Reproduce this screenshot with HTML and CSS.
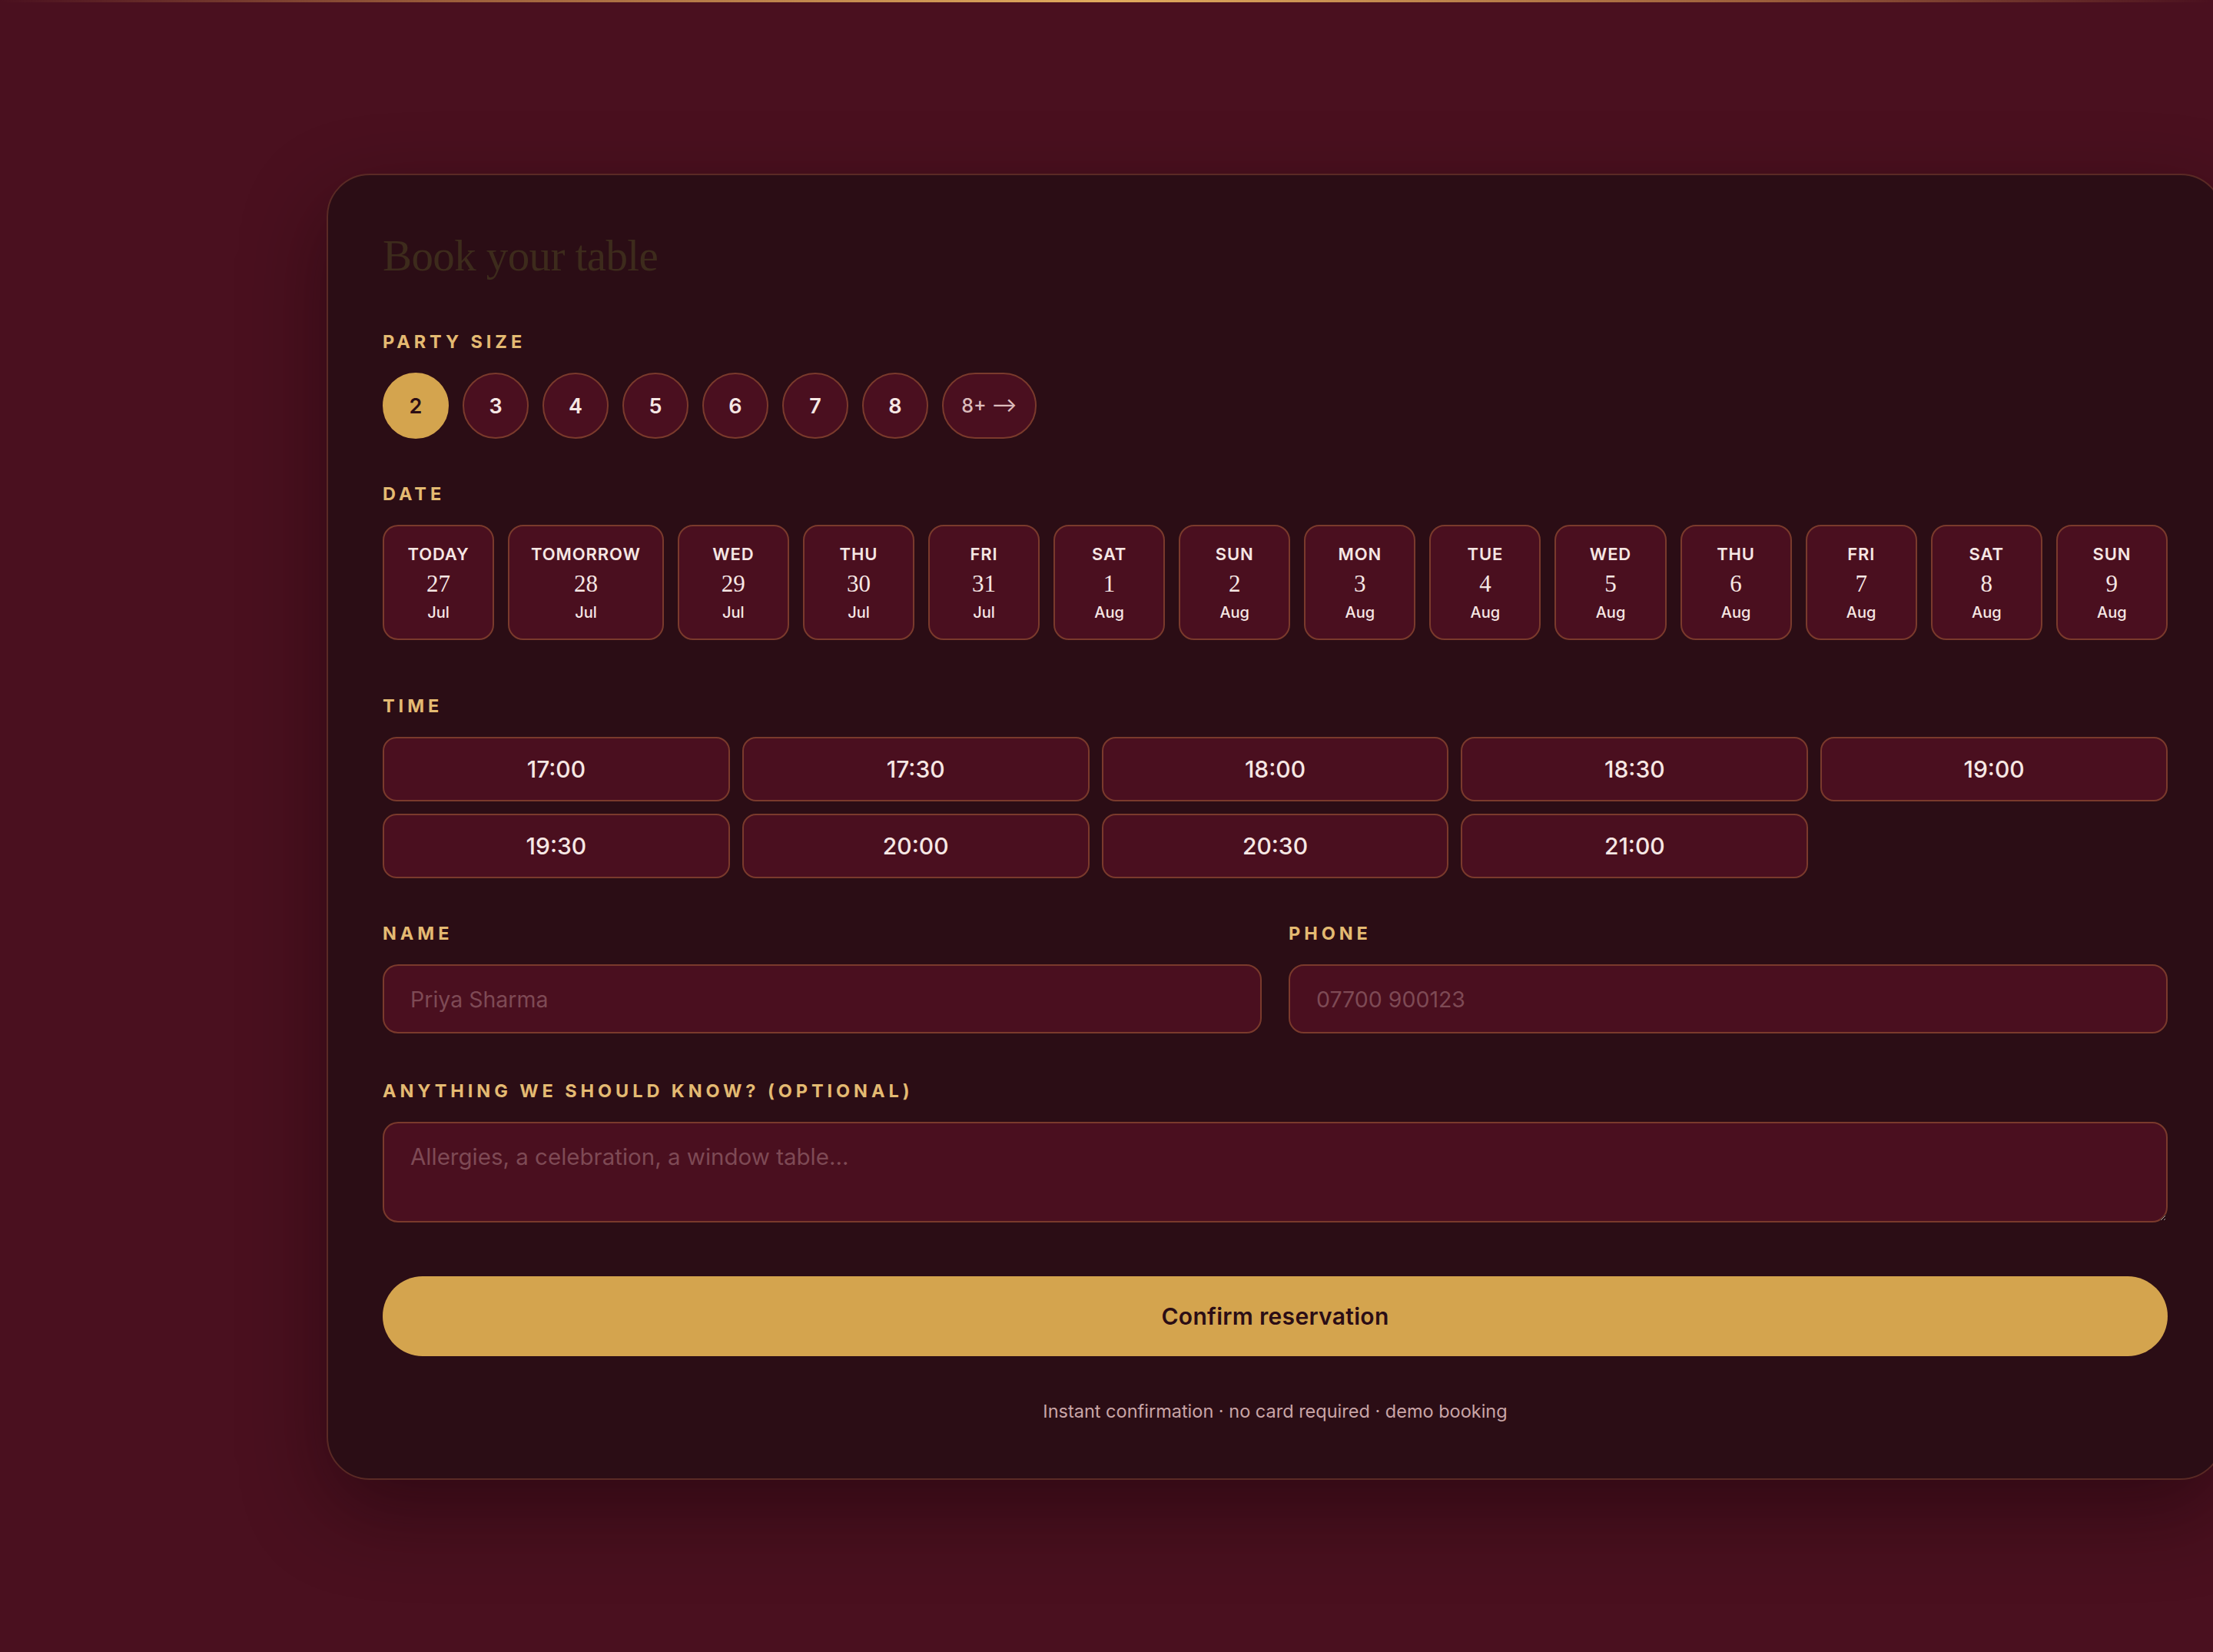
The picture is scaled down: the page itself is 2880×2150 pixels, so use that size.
FILE: index.html
```html
<!DOCTYPE html>
<html lang="en">
<head>
<meta charset="utf-8">
<title>Book your table</title>
<link rel="stylesheet" href="styles.css">
</head>
<body>
<div class="topline"></div>
<main class="page">
  <form class="card">
    <h1 class="title">Book your table</h1>

    <section class="section">
      <div class="label">Party size</div>
      <div class="party">
        <button type="button" class="size is-active">2</button>
        <button type="button" class="size">3</button>
        <button type="button" class="size">4</button>
        <button type="button" class="size">5</button>
        <button type="button" class="size">6</button>
        <button type="button" class="size">7</button>
        <button type="button" class="size">8</button>
        <button type="button" class="size more">8+ &#10230;</button>
      </div>
    </section>

    <section class="section">
      <div class="label">Date</div>
      <div class="dates">
        <button type="button" class="date"><span class="dow">TODAY</span><span class="num">27</span><span class="mon">Jul</span></button>
        <button type="button" class="date"><span class="dow">TOMORROW</span><span class="num">28</span><span class="mon">Jul</span></button>
        <button type="button" class="date"><span class="dow">WED</span><span class="num">29</span><span class="mon">Jul</span></button>
        <button type="button" class="date"><span class="dow">THU</span><span class="num">30</span><span class="mon">Jul</span></button>
        <button type="button" class="date"><span class="dow">FRI</span><span class="num">31</span><span class="mon">Jul</span></button>
        <button type="button" class="date"><span class="dow">SAT</span><span class="num">1</span><span class="mon">Aug</span></button>
        <button type="button" class="date"><span class="dow">SUN</span><span class="num">2</span><span class="mon">Aug</span></button>
        <button type="button" class="date"><span class="dow">MON</span><span class="num">3</span><span class="mon">Aug</span></button>
        <button type="button" class="date"><span class="dow">TUE</span><span class="num">4</span><span class="mon">Aug</span></button>
        <button type="button" class="date"><span class="dow">WED</span><span class="num">5</span><span class="mon">Aug</span></button>
        <button type="button" class="date"><span class="dow">THU</span><span class="num">6</span><span class="mon">Aug</span></button>
        <button type="button" class="date"><span class="dow">FRI</span><span class="num">7</span><span class="mon">Aug</span></button>
        <button type="button" class="date"><span class="dow">SAT</span><span class="num">8</span><span class="mon">Aug</span></button>
        <button type="button" class="date"><span class="dow">SUN</span><span class="num">9</span><span class="mon">Aug</span></button>
      </div>
    </section>

    <section class="section section-time">
      <div class="label">Time</div>
      <div class="times">
        <button type="button" class="slot">17:00</button>
        <button type="button" class="slot">17:30</button>
        <button type="button" class="slot">18:00</button>
        <button type="button" class="slot">18:30</button>
        <button type="button" class="slot">19:00</button>
        <button type="button" class="slot">19:30</button>
        <button type="button" class="slot">20:00</button>
        <button type="button" class="slot">20:30</button>
        <button type="button" class="slot">21:00</button>
      </div>
    </section>

    <section class="section fields">
      <label class="field">
        <span class="label">Name</span>
        <input class="input" type="text" placeholder="Priya Sharma">
      </label>
      <label class="field">
        <span class="label">Phone</span>
        <input class="input" type="tel" placeholder="07700 900123">
      </label>
    </section>

    <section class="section section-notes">
      <label class="field">
        <span class="label">Anything we should know? (optional)</span>
        <textarea class="input notes" placeholder="Allergies, a celebration, a window table..."></textarea>
      </label>
    </section>

    <button type="button" class="confirm">Confirm reservation</button>
    <p class="footnote">Instant confirmation · no card required · demo booking</p>
  </form>
</main>
</body>
</html>
```

FILE: styles.css
```css
html, body {
  margin: 0;
  padding: 0;
}

body {
  background: #4a101f;
  min-height: 2150px;
  overflow: hidden;
  font-family: Inter, "Noto Sans", "Liberation Sans", sans-serif;
  color: #f6e7e4;
}

.topline {
  height: 3px;
  background: linear-gradient(90deg, rgba(201, 138, 74, 0) 0%, rgba(190, 126, 70, 0.7) 20%, #e2ac5e 50%, rgba(190, 126, 70, 0.7) 80%, rgba(201, 138, 74, 0) 100%);
}

.page {
  padding: 223px 0 200px 425px;
}

.card {
  box-sizing: border-box;
  width: 2469px;
  background: #2b0d15;
  border: 2px solid #5a2a25;
  border-radius: 56px;
  padding: 71px 71px 74px;
  box-shadow: 0 40px 110px rgba(18, 0, 6, 0.45);
}

.title {
  margin: 3px 0 67px;
  font-family: "Liberation Serif", "DejaVu Serif", serif;
  font-weight: 400;
  font-size: 57px;
  line-height: 62px;
  letter-spacing: -0.6px;
  color: #3d2b1c;
}

.section {
  margin: 0;
}

.section + .section {
  margin-top: 58px;
}

.section-time {
  margin-top: 72px !important;
}

.section-notes {
  margin-top: 61px !important;
}

.label {
  display: block;
  margin-bottom: 26px;
  font-size: 23.5px;
  line-height: 28px;
  font-weight: 700;
  letter-spacing: 0.21em;
  text-transform: uppercase;
  color: #e4ba72;
}

button {
  font-family: inherit;
  cursor: pointer;
}

/* party size */
.party {
  display: flex;
  gap: 18px;
}

.size {
  box-sizing: border-box;
  width: 86px;
  height: 86px;
  border-radius: 43px;
  border: 2px solid #7a3a2c;
  background: #4a0f1f;
  color: #f6e7e4;
  font-size: 27px;
  font-weight: 600;
  padding: 0;
  display: flex;
  align-items: center;
  justify-content: center;
}

.size.is-active {
  background: #d4a44e;
  border-color: #d4a44e;
  color: #2b0d15;
}

.size.more {
  width: 123px;
  font-size: 25px;
  font-weight: 500;
  color: #dcbcbc;
  white-space: nowrap;
}

/* dates */
.dates {
  display: flex;
  gap: 18px;
}

.date {
  flex: 1 1 0;
  box-sizing: border-box;
  height: 150px;
  padding: 23px 28px;
  border: 2px solid #7a3a2c;
  border-radius: 20px;
  background: #4a0f1f;
  color: #f6e7e4;
  display: flex;
  flex-direction: column;
  align-items: center;
}

.dow {
  font-size: 22px;
  line-height: 26px;
  font-weight: 600;
  letter-spacing: 0.04em;
  white-space: nowrap;
}

.num {
  font-family: "Liberation Serif", "DejaVu Serif", serif;
  font-size: 31px;
  line-height: 52px;
  font-weight: 400;
}

.mon {
  font-size: 20px;
  line-height: 22px;
  font-weight: 500;
}

/* times */
.times {
  display: grid;
  grid-template-columns: repeat(5, 1fr);
  gap: 16px;
}

.slot {
  box-sizing: border-box;
  height: 84px;
  border: 2px solid #7a3a2c;
  border-radius: 18px;
  background: #4a0f1f;
  color: #f6e7e4;
  font-size: 30px;
  font-weight: 500;
  padding: 0;
}

/* fields */
.fields {
  display: grid;
  grid-template-columns: 1fr 1fr;
  gap: 35px;
}

.field {
  display: block;
}

.input {
  display: block;
  box-sizing: border-box;
  width: 100%;
  height: 90px;
  margin: 0;
  padding: 0 34px;
  border: 2px solid #7a3a2c;
  border-radius: 20px;
  background: #4a0f1f;
  color: #f6e7e4;
  font-family: inherit;
  font-size: 28.5px;
  outline: none;
}

.input::placeholder {
  color: #7e4a55;
}

.notes {
  height: 131px;
  padding: 23px 34px;
  font-size: 29.5px;
  line-height: 1.4;
  resize: vertical;
}

/* confirm */
.confirm {
  display: block;
  width: 100%;
  height: 104px;
  margin-top: 70px;
  border: none;
  border-radius: 52px;
  background: #d4a44e;
  color: #2b0d15;
  font-size: 30px;
  font-weight: 600;
  letter-spacing: 0.01em;
}

.footnote {
  margin: 58px 0 0;
  text-align: center;
  font-size: 23.5px;
  line-height: 27px;
  color: #c9a5a7;
}
```
